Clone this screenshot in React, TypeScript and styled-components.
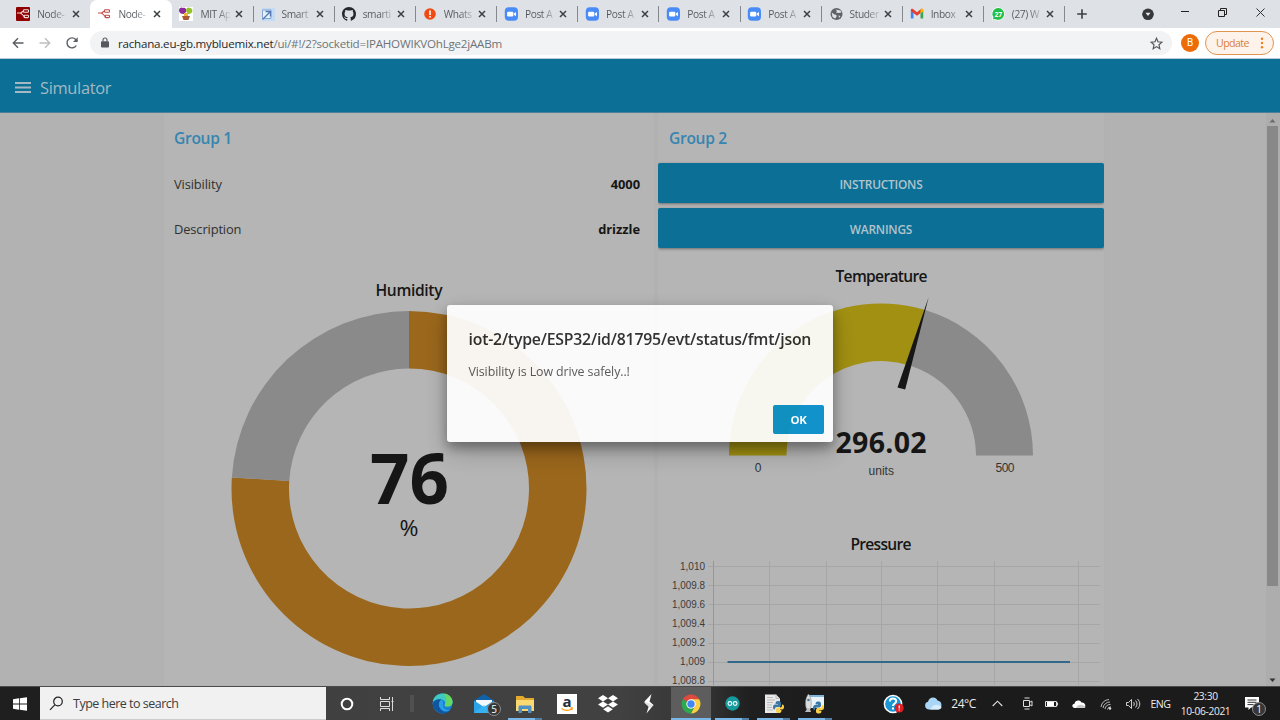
import React from 'react';
import styled, { createGlobalStyle } from 'styled-components';

const GlobalStyle = createGlobalStyle`
  * { box-sizing: border-box; }
  body { margin: 0; overflow: hidden; font-family: "Open Sans", "Noto Sans", sans-serif; }
  svg { display: block; flex: none; }
`;

const Screen = styled.div`
  position: relative;
  width: 1280px;
  height: 720px;
  display: flex;
  flex-direction: column;
  overflow: hidden;
  background: #b2b2b2;
`;

/* ---------- browser chrome ---------- */

const TabStrip = styled.div`
  height: 28px;
  flex: none;
  display: flex;
  padding-left: 9.3px;
  background: #dee1e6;
`;

const TabItem = styled.div<{ $active?: boolean; $divider?: boolean }>`
  position: relative;
  width: 81.15px;
  flex: none;
  display: flex;
  align-items: center;
  padding-left: ${p => (p.$divider ? 7.8 : 7)}px;
  background: ${p => (p.$active ? '#fff' : 'transparent')};
  border-radius: 7px 7px 0 0;
  &::after {
    content: '';
    position: absolute;
    right: -1px;
    top: 6px;
    width: 1px;
    height: 16px;
    background: ${p => (p.$divider ? '#85888c' : 'transparent')};
  }
`;

const TabText = styled.span<{ $fade: string }>`
  width: 30px;
  margin-left: 7px;
  overflow: hidden;
  white-space: nowrap;
  font-size: 10.2px;
  line-height: 16px;
  letter-spacing: -0.4px;
  color: transparent;
  background: linear-gradient(90deg, #54585d 55%, ${p => p.$fade} 108%);
  background-clip: text;
  -webkit-background-clip: text;
`;

const TabClose = styled.svg`
  margin-left: 4.5px;
`;

const NewTab = styled.svg`
  margin: 8px 0 0 12px;
`;

const WindowButtons = styled.div`
  margin-left: auto;
  width: 139px;
  display: flex;
  align-items: flex-start;
`;

const AddressRow = styled.div`
  height: 31px;
  flex: none;
  display: flex;
  align-items: center;
  background: #fff;
  border-bottom: 1px solid #b9cbd6;
  padding-left: 12px;
`;

const NavIcons = styled.div`
  width: 78px;
  display: flex;
  gap: 15px;
`;

const Omnibox = styled.div`
  width: 1082px;
  height: 24px;
  border-radius: 12px;
  background: #f1f3f4;
  display: flex;
  align-items: center;
  padding: 0 9px 0 10px;
`;

const Url = styled.span`
  flex: 1;
  margin-left: 8px;
  font-size: 11.6px;
  letter-spacing: -0.22px;
  color: #6f7377;
  white-space: nowrap;
  b { font-weight: 400; color: #26292c; }
`;

const Avatar = styled.div`
  width: 18px;
  height: 18px;
  margin: 0 6px 0 9px;
  border-radius: 50%;
  background: #ee6c08;
  color: #fff;
  font: 10px/18px Roboto, sans-serif;
  text-align: center;
`;

const UpdateChip = styled.div`
  width: 69px;
  height: 24px;
  border: 1px solid #e19352;
  border-radius: 12px;
  background: #fdf3ea;
  color: #dc7f39;
  font-size: 10.6px;
  letter-spacing: -0.55px;
  display: flex;
  align-items: center;
  justify-content: space-between;
  padding: 0 9px 0 10px;
`;

/* ---------- dashboard ---------- */

const Header = styled.div`
  height: 54px;
  flex: none;
  display: flex;
  align-items: center;
  padding: 3px 0 0 15px;
  gap: 9px;
  background: #0b6f96;
  color: #a4b9c2;
  font-size: 16.4px;
  border-bottom: 1px solid #4c8099;
`;

const HeaderTitle = styled.span`
  letter-spacing: -0.32px;
`;

const Body = styled.div`
  flex: 1;
  min-height: 0;
  display: flex;
  overflow: hidden;
  padding-left: 163px;
`;

const Card = styled.section<{ $w: number; $gap?: number }>`
  width: ${p => p.$w}px;
  margin-right: ${p => p.$gap ?? 0}px;
  flex: none;
  background: #b5b5b5;
  border: 1px solid #b1b1b1;
  border-top: 0;
  overflow: hidden;
`;

const GroupTitle = styled.h2<{ $inset: number }>`
  height: 50px;
  margin: 0;
  padding-left: ${p => p.$inset}px;
  font-size: 15.6px;
  font-weight: 600;
  line-height: 51px;
  letter-spacing: -0.32px;
  color: #3585b0;
`;

const Reading = styled.div`
  height: 45px;
  display: flex;
  justify-content: space-between;
  align-items: center;
  padding: 0 14px 4px 10px;
  font-size: 12.9px;
  letter-spacing: -0.13px;
  color: #303030;
  b { color: #161616; letter-spacing: -0.03px; }
`;

const ActionButton = styled.button`
  display: block;
  width: 446px;
  height: 40px;
  margin: 0 0 5px;
  padding: 0;
  border: 0;
  border-radius: 2px;
  background: #0b6f96;
  box-shadow: 0 1px 3px rgba(0, 0, 0, 0.4);
  color: #b2c3cb;
  font: 600 11.9px/42px "Open Sans", sans-serif;
  letter-spacing: -0.22px;
`;

const ScrollTrack = styled.div`
  margin-left: auto;
  width: 14px;
  display: flex;
  flex-direction: column;
  justify-content: space-between;
  background: #adadad;
  align-items: center;
  padding: 5px 2px 3px 1px;
`;

const ScrollThumb = styled.div`
  width: 11px;
  height: 460px;
  background: #888;
  margin: 3px 0 auto;
`;

const Dialog = styled.div`
  position: absolute;
  left: 447px;
  top: 305px;
  width: 386px;
  height: 137px;
  border-radius: 3px;
  background: #fff;
  opacity: 0.935;
  box-shadow: 0 6px 12px rgba(0, 0, 0, 0.34), 0 10px 26px rgba(0, 0, 0, 0.22);
  padding: 21px 9px 8px 21.5px;
  display: flex;
  flex-direction: column;
`;

const DialogTitle = styled.div`
  font-size: 15.8px;
  font-weight: 600;
  line-height: 27px;
  letter-spacing: -0.2px;
  color: #2a2a2a;
  white-space: nowrap;
`;

const DialogText = styled.div`
  margin-top: 9px;
  font-size: 12.4px;
  line-height: 20px;
  letter-spacing: -0.1px;
  color: #555;
`;

const OkButton = styled.button`
  margin: auto 0 0 auto;
  width: 51px;
  height: 29px;
  border: 0;
  border-radius: 2px;
  background: #0690cc;
  color: #fff;
  font: 700 11.4px/30px "Open Sans", sans-serif;
  letter-spacing: -0.3px;
  padding: 0;
`;

/* ---------- taskbar ---------- */

const Taskbar = styled.div`
  height: 34px;
  flex: none;
  display: flex;
  align-items: stretch;
  border-top: 1px solid #4b4b4b;
  background: linear-gradient(90deg, #1f1f1f 40px, #404040 41px, #414141 620px, #343434 705px, #1f1f1f 750px, #1b1b1b 860px);
`;

const Slot = styled.div<{ $w: number; $lit?: boolean; $run?: number }>`
  position: relative;
  width: ${p => p.$w}px;
  flex: none;
  display: flex;
  align-items: center;
  justify-content: center;
  background: ${p => (p.$lit ? '#5d5d5d' : 'transparent')};
  &::after {
    content: '';
    position: absolute;
    bottom: 0;
    left: calc(50% - ${p => (p.$run ?? 0) / 2}px);
    width: ${p => p.$run ?? 0}px;
    height: 2px;
    background: ${p => (p.$lit ? '#78b7e8' : 'linear-gradient(90deg, #78b7e8 80%, #4f7ea6 80%)')};
  }
`;

const SearchBox = styled.div`
  width: 286px;
  flex: none;
  background: #f1f1f1;
  border-bottom: 1px solid #ccc;
  display: flex;
  align-items: center;
  padding-left: 9px;
  gap: 9px;
  font-size: 12.5px;
  letter-spacing: -0.5px;
  color: #3c3c3c;
`;

const DragMark = styled.div`
  width: 4px;
  height: 17px;
  background: #505050;
`;

const CountBadge = styled.span<{ $x: number }>`
  position: absolute;
  left: ${p => p.$x}px;
  top: 15px;
  width: 14px;
  height: 14px;
  border-radius: 50%;
  background: #373737;
  border: 1px solid #8c8c8c;
  color: #fff;
  font-size: 10px;
  line-height: 12px;
  text-align: center;
`;

const TrayText = styled.span`
  color: #ececec;
  font-size: 12px;
  letter-spacing: -0.5px;
  white-space: nowrap;
`;

const Lang = styled(TrayText)`
  font-size: 10.6px;
`;

const Clock = styled.div`
  color: #ececec;
  font-size: 10.2px;
  line-height: 15px;
  letter-spacing: -0.35px;
  text-align: center;
  white-space: nowrap;
`;

const Spacer = styled.div`
  flex: 1;
`;

/* ---------- favicons ---------- */

const NodeRedMark = ({ color }: { color: string }) => (
  <g fill="none" stroke={color} strokeWidth="1.1">
    <path d="M1 6h3c2 0 2-2 4-2M4 6c2 0 3 3.5 5 3.5" />
    <rect x="7.5" y="2.8" width="5" height="2.4" rx=".8" />
    <rect x="8" y="8.2" width="4.5" height="2.4" rx=".8" />
  </g>
);

const favicons: Record<string, React.ReactNode> = {
  nodeDark: <><rect width="14" height="14" rx="1" fill="#8f0000" /><NodeRedMark color="#f2dada" /></>,
  node: <NodeRedMark color="#c34a4a" />,
  mit: (
    <>
      <rect width="14" height="14" fill="#fff" />
      <path d="M0 3.5C0 0 3 0 4 1c2-1 4 1 3 4L5 7C2 7 0 6 0 3.500Z" fill="#8c2a9b" />
      <path d="M7 4c0-4 3-4 4-3 3 0 4 6-2 6Z" fill="#96c02a" />
      <path d="M5 6h4v3H5Z" fill="#f0b13a" />
      <path d="M3 9h8l-1.500 4h-5Z" fill="#a85b35" />
    </>
  ),
  smart: (
    <>
      <rect x="1" y="1" width="13" height="13" fill="#c4dcf3" />
      <path d="M1.500 3h8.500v8.500H1.500Z" fill="#e6f0fa" stroke="#84a5cf" />
      <path d="M1.500 12.500 9 5M4.500 4.500h5v5" fill="none" stroke="#5578b4" strokeWidth="1.300" />
    </>
  ),
  github: (
    <path
      transform="scale(.875)"
      fill="#24292e"
      d="M8 0C3.580 0 0 3.580 0 8c0 3.540 2.290 6.530 5.470 7.590.4.070.55-.17.55-.38 0-.19-.01-.82-.01-1.490-2.010.37-2.530-.49-2.690-.94-.09-.23-.48-.94-.82-1.130-.28-.15-.68-.52-.01-.53.63-.01 1.080.58 1.230.82.72 1.210 1.870.87 2.330.66.070-.52.28-.87.51-1.070-1.780-.2-3.640-.89-3.640-3.950 0-.87.31-1.590.82-2.150-.08-.2-.36-1.020.08-2.120 0 0 .67-.21 2.200.82a7.600 7.600 0 0 1 4 0c1.530-1.040 2.200-.82 2.200-.82.44 1.100.16 1.920.08 2.120.51.56.82 1.270.82 2.150 0 3.070-1.870 3.750-3.650 3.950.29.25.54.73.54 1.480 0 1.070-.01 1.930-.01 2.200 0 .21.15.46.55.38A8 8 0 0 0 16 8c0-4.420-3.580-8-8-8Z"
    />
  ),
  alert: (
    <>
      <circle cx="7" cy="7" r="5.800" fill="#f04b14" />
      <rect x="6.200" y="3.500" width="1.600" height="4.500" fill="#fff" />
      <rect x="6.200" y="9" width="1.600" height="1.600" fill="#fff" />
    </>
  ),
  zoom: (
    <>
      <rect x=".8" y=".2" width="13.200" height="13.600" rx="4" fill="#4a8cf7" />
      <rect x="3.100" y="4.700" width="6.200" height="4.800" rx="1.200" fill="#fff" />
      <path d="m9.800 6.500 2.200-1.600v4.400L9.800 7.700Z" fill="#fff" />
    </>
  ),
  globe: (
    <>
      <circle cx="7.500" cy="7" r="6" fill="#5f6368" />
      <path d="M2.700 5.500 5.500 7.500 7.500 8v2L6 11.500 3.500 10M6.500 2.500 8 4 7 5.500 9.500 6l3-.5-1-2M9.500 8.500l2 .5-1.500 2Z" fill="#dee1e6" />
    </>
  ),
  gmail: (
    <>
      <path d="M.8 3.500v8h2.700V5Z" fill="#4285f4" />
      <path d="M13.200 3.500v8h-2.700V5Z" fill="#34a853" />
      <path d="M.8 4V3c0-1 1.300-1.600 2.200-.9L7 5.200l4-3.100c.9-.7 2.200-.1 2.200.9v1L7 8.700Z" fill="#e33e2f" />
      <path d="M10.500 2.600 11 2.100c.9-.7 2.200-.1 2.200.9v1.500l-2.700 2Z" fill="#fbbc04" />
    </>
  ),
  whatsapp: (
    <>
      <path d="M7.300.3a6.600 6.600 0 1 1-3.300 12.400L.8 13.600l.9-3.200A6.600 6.600 0 0 1 7.300.3Z" fill="#fff" />
      <path d="M7.300 1a5.900 5.900 0 1 1-3.200 10.900L1.800 12.600l.7-2.300A5.900 5.900 0 0 1 7.300 1Z" fill="#1fbf4a" />
      <text x="7.300" y="9.500" textAnchor="middle" fontSize="6.800" fontWeight="700" fill="#fff">27</text>
    </>
  ),
};

const tabs = [
  { icon: 'nodeDark', text: 'Node-' },
  { icon: 'node', text: 'Node-', active: true },
  { icon: 'mit', text: 'MIT Ap', divider: true },
  { icon: 'smart', text: 'Smart', divider: true },
  { icon: 'github', text: 'smarti', divider: true },
  { icon: 'alert', text: 'Whats', divider: true },
  { icon: 'zoom', text: 'Post A', divider: true },
  { icon: 'zoom', text: 'Post A', divider: true },
  { icon: 'zoom', text: 'Post A', divider: true },
  { icon: 'zoom', text: 'Post A', divider: true },
  { icon: 'globe', text: 'Studer', divider: true },
  { icon: 'gmail', text: 'Inbox', divider: true },
  { icon: 'whatsapp', text: '(27) W', divider: true },
];

const BrowserTabs = () => (
  <TabStrip>
    {tabs.map((t, i) => (
      <TabItem key={i} $active={t.active} $divider={t.divider}>
        <svg width="14" height="14">{favicons[t.icon]}</svg>
        <TabText $fade={t.active ? '#fff' : '#dee1e6'}>{t.text}</TabText>
        <TabClose width="8" height="8"><path d="m1 1 6 6M7 1 1 7" stroke="#3c4043" strokeWidth="1.500" /></TabClose>
      </TabItem>
    ))}
    <NewTab width="12" height="12"><path d="M6 1.200v9.600M1.200 6h9.600" stroke="#3c4043" strokeWidth="1.600" /></NewTab>
    <WindowButtons>
      <svg width="139" height="28">
        <circle cx="7" cy="14.300" r="5.800" fill="#35373a" />
        <path d="M4.500 12.800h5L7 16Z" fill="#e8eaed" />
        <path d="M40 11.500h8" stroke="#222" />
        <path d="M77.500 10.500h6v6h-6ZM79.500 10V8.500h6v6H84" fill="none" stroke="#222" />
        <path d="m115.500 8.500 8 8M123.500 8.500l-8 8" stroke="#333" />
      </svg>
    </WindowButtons>
  </TabStrip>
);

const AddressBar = () => (
  <AddressRow>
    <NavIcons>
      <svg width="12" height="12"><path d="M11.500 6H1.500M6 1.200 1.300 6 6 10.800" fill="none" stroke="#5a5e62" strokeWidth="1.400" /></svg>
      <svg width="12" height="12"><path d="M.5 6h10M6 1.200 10.700 6 6 10.800" fill="none" stroke="#bcbec1" strokeWidth="1.400" /></svg>
      <svg width="12" height="12">
        <path d="M10.300 8.500A5 5 0 1 1 9.700 2.500L11 4" fill="none" stroke="#5a5e62" strokeWidth="1.400" />
        <path d="M11.700.3V5H7Z" fill="#5a5e62" />
      </svg>
    </NavIcons>
    <Omnibox>
      <svg width="10" height="12">
        <rect x="1" y="4.200" width="8" height="6.300" rx="1" fill="#55595e" />
        <path d="M3 4.500V3a2 2 0 0 1 4 0v1.500" fill="none" stroke="#55595e" strokeWidth="1.100" />
      </svg>
      <Url><b>rachana.eu-gb.mybluemix.net</b>/ui/#!/2?socketid=IPAHOWIKVOhLge2jAABm</Url>
      <svg width="13" height="13"><path d="m6.500 1.300 1.500 3.500 3.900.4-2.900 2.600.8 3.900-3.300-2.100-3.300 2.100.8-3.900-2.900-2.600 3.900-.4Z" fill="none" stroke="#54585c" strokeWidth="1.200" /></svg>
    </Omnibox>
    <Avatar>B</Avatar>
    <UpdateChip>
      Update
      <svg width="4" height="12"><g fill="#ef7d1a"><circle cx="2" cy="1.800" r="1.200" /><circle cx="2" cy="6" r="1.200" /><circle cx="2" cy="10.200" r="1.200" /></g></svg>
    </UpdateChip>
  </AddressRow>
);

/* ---------- widgets ---------- */

const HumidityGauge = () => (
  <svg width="490" height="433" viewBox="164 253 490 433" textAnchor="middle" fill="#161616">
    <text x="409" y="295.500" fontSize="15.600" fontWeight="600" textLength="67">Humidity</text>
    <path d="M409 311a177.500 177.500 0 1 1-177.150 166.400l57.400 3.600A120 120 0 1 0 409 368.500Z" fill="#9b671c" />
    <path d="M231.850 477.400A177.500 177.500 0 0 1 409 311v57.500A120 120 0 0 0 289.250 481Z" fill="#8a8a8a" />
    <text x="409.500" y="504" fontSize="69" fontWeight="700" textLength="79">76</text>
    <text x="409" y="536" fontSize="22.500" textLength="19" lengthAdjust="spacingAndGlyphs">%</text>
  </svg>
);

const TemperatureGauge = () => (
  <svg width="446" height="270" viewBox="658 253 446 270" textAnchor="middle" fill="#161616">
    <text x="881.500" y="281.500" fontSize="15.600" fontWeight="600" textLength="92">Temperature</text>
    <path d="M729 455.500a152 152 0 0 1 195.400-145.700L908 365A94.500 94.500 0 0 0 786.500 455.500Z" fill="#a19012" />
    <path d="M924.400 309.800A152 152 0 0 1 1033 455.500h-57A94.500 94.500 0 0 0 908 365Z" fill="#8a8a8a" />
    <path d="M928.700 297 905.200 389.500 897.500 387.500Z" />
    <text x="881" y="452.500" fontSize="28.500" fontWeight="700" textLength="91">296.02</text>
    <g fontFamily="Liberation Sans, Arial, sans-serif" fontSize="12" fill="#333">
      <text x="758" y="471.500">0</text>
      <text x="881.300" y="475">units</text>
      <text x="1005" y="471.500" textLength="19">500</text>
    </g>
  </svg>
);

const yTicks = ['1,010', '1,009.8', '1,009.6', '1,009.4', '1,009.2', '1,009', '1,008.8'];
const xGrid = [769.5, 826.5, 881.5, 937.5, 994.5, 1078.5];

const PressureChart = () => (
  <svg width="446" height="163" viewBox="658 523 446 163">
    <text x="881" y="549.500" fontSize="15.600" fontWeight="600" fill="#161616" textAnchor="middle" textLength="61">Pressure</text>
    <g stroke="#a6a6a6" strokeWidth="1">
      {yTicks.map((t, i) => <path key={t} d={`M708 ${Math.round(566 + i * 19.2) + 0.5}H1100`} />)}
      {xGrid.map(x => <path key={x} d={`M${x} 561V686`} />)}
      <path d="M713.500 561V686" stroke="#969696" />
    </g>
    <g fontFamily="Liberation Sans, Arial, sans-serif" fontSize="10" fill="#3b3b3b" textAnchor="end">
      {yTicks.map((t, i) => (
        <text key={t} x="705" y={569.5 + i * 19.1} textLength={t.length > 5 ? 33 : 25} lengthAdjust="spacingAndGlyphs">{t}</text>
      ))}
    </g>
    <path d="M727.500 662H1070" stroke="#32698a" strokeWidth="2" />
  </svg>
);

const Dashboard = () => (
  <>
    <Header>
      <svg width="16" height="12"><path d="M0 2h16M0 6.500h16M0 11h16" stroke="#a4b9c2" strokeWidth="1.900" /></svg>
      <HeaderTitle>Simulator</HeaderTitle>
    </Header>
    <Body>
      <Card $w={492} $gap={2}>
        <GroupTitle $inset={10}>Group 1</GroupTitle>
        <Reading><span>Visibility</span><b>4000</b></Reading>
        <Reading><span>Description</span><b>drizzle</b></Reading>
        <HumidityGauge />
      </Card>
      <Card $w={448}>
        <GroupTitle $inset={11}>Group 2</GroupTitle>
        <ActionButton>INSTRUCTIONS</ActionButton>
        <ActionButton>WARNINGS</ActionButton>
        <TemperatureGauge />
        <PressureChart />
      </Card>
      <ScrollTrack>
        <svg width="7" height="5"><path d="M.5 4.500 3.500 1l3 3.500Z" fill="#6b6b6b" /></svg>
        <ScrollThumb />
        <svg width="7" height="5"><path d="M.5.5 3.500 4l3-3.500Z" fill="#333" /></svg>
      </ScrollTrack>
    </Body>
  </>
);

/* ---------- taskbar icons ---------- */

const PythonMark = ({ x, y }: { x: number; y: number }) => (
  <g transform={`translate(${x} ${y})`}>
    <path d="M5 0c3 0 3 1 3 4 0 1-1 2-2 2H4C2 6 2 7 2 8.500 0 8.500 0 7 0 6s.5-2.500 2-2.500h3V3H2.500C2.500 1 3 0 5 0Z" fill="#3b78a8" />
    <path d="M6 12c-3 0-3-1-3-3s1-2.500 2-2.500h2c2 0 2-1 2-3 2 0 2 1.500 2 2.500s-.5 2.500-2 2.500H6v.5h2.500C8.500 11 8 12 6 12Z" fill="#fcd04b" />
  </g>
);

const TaskIcons = () => (
  <>
    <Slot $w={40}>
      <svg width="14" height="14"><path d="M0 2.200 6 1.300v5.300H0ZM6.800 1.200 14 .2v6.400H6.800ZM0 7.400h6v5.300l-6-.9ZM6.800 7.400H14v6.400l-7.200-1Z" fill="#fff" /></svg>
    </Slot>
    <SearchBox>
      <svg width="15" height="15"><circle cx="9" cy="5.500" r="4.300" fill="none" stroke="#222" strokeWidth="1.200" /><path d="M6 8.700 1 13.800" stroke="#222" strokeWidth="1.200" /></svg>
      Type here to search
    </SearchBox>
    <Slot $w={41}><svg width="14" height="14"><circle cx="7" cy="7" r="5.300" fill="none" stroke="#fff" strokeWidth="2" /></svg></Slot>
    <Slot $w={39}>
      <svg width="16" height="14"><path d="M1.500 0v2.500h9V0M1.500 14v-2.500h9V14M1.500 4.500h9v5h-9ZM13.500 0v14M12.500 4.500h2" fill="none" stroke="#dcdcdc" /></svg>
    </Slot>
    <Slot $w={12}><DragMark /></Slot>
    <Slot $w={48}>
      <svg width="21" height="21">
        <circle cx="10.500" cy="10.500" r="10" fill="#1680d4" />
        <path d="M.8 8.500C2 2.500 7 .3 11 .5c5 .2 9.500 4 9.500 8.500 0 3-2.500 4.600-5 4.600s-3.600-.8-2.800-2.100C14 9 12 6.500 9 6.500c-3.500 0-6.500 1-8.200 2Z" fill="#3fc9c2" />
        <path d="M12 .5c5 .5 8.500 4 8.500 8.500 0 3-2.500 4.600-5 4.600-1.500 0-2.700-.3-2.900-1C16 9 14 4 12 .5Z" fill="#66d85f" />
        <path d="M.8 12C1 7 6 5.500 9.500 6.500 6 8 6 15 11 18.200c3 1.500 6 0 7.500-1.500-3 4.500-9 4.500-12.500 2S.8 14 .8 12Z" fill="#0e57a0" />
        <path d="M9.500 6.700C7 8 6 12 8 15c2 3.500 7 4.200 10 2-4 .5-8-2-7-6 .4-2-.2-3.500-1.500-4.300Z" fill="#2a9ce8" />
      </svg>
    </Slot>
    <Slot $w={36}>
      <svg width="22" height="20">
        <path d="M1 6.500 11 0l10 6.500V19H1Z" fill="#1061a8" />
        <path d="M3 6h16v8H3Z" fill="#f4f8fb" />
        <path d="M1 6.500 11 13l10-6.500V19H1Z" fill="#2aa4e8" />
        <path d="M1 19 11 11l10 8Z" fill="#41bdf5" opacity=".6" />
      </svg>
      <CountBadge $x={21}>5</CountBadge>
    </Slot>
    <Slot $w={45} $run={34}>
      <svg width="20" height="18">
        <path d="M1 1h7l2 2h9v13H1Z" fill="#e4aa2e" />
        <path d="M1 5h18v11H1Z" fill="#fad872" />
        <path d="M3.500 18v-6c0-1 .5-1.500 1.500-1.500h10c1 0 1.500.5 1.500 1.500v6h-3.500v-4h-6v4Z" fill="#4f91c4" />
      </svg>
    </Slot>
    <Slot $w={40}>
      <svg width="20" height="20">
        <rect width="20" height="20" fill="#fff" />
        <text x="10" y="12.500" fontSize="15" fontWeight="700" textAnchor="middle" fill="#222d3e">a</text>
        <path d="M4.500 14.500c3.500 2.500 7.500 2.300 10.500.3M13.300 14l2-.1-.5 2" fill="none" stroke="#ff9900" strokeWidth="1.200" />
      </svg>
    </Slot>
    <Slot $w={42}>
      <svg width="20" height="18"><path d="M5 0 10 3.200 5 6.400 0 3.200ZM15 0l5 3.200-5 3.200-5-3.200ZM5 6.400l5 3.200-5 3.200-5-3.200ZM15 6.400l5 3.200-5 3.200-5-3.200ZM10 11.200l4.800 3.100L10 17.500l-4.800-3.200Z" fill="#fff" /></svg>
    </Slot>
    <Slot $w={40}>
      <svg width="12" height="20"><path d="M8.500 0 1.500 7.500l4.500 4L3.500 19.500l7-8.500L6.500 7.500Z" fill="#fff" /><path d="M1.500 7.500 10.500 11 7 14 1.500 9Z" fill="#e4e4e4" /></svg>
    </Slot>
    <Slot $w={2} />
    <Slot $w={40} $lit $run={40}>
      <svg width="20" height="20" viewBox="0 0 20 20">
        <path d="M10 10 1.800 5.300A9.500 9.500 0 0 1 18.200 5.300Z" fill="#dd4b3e" />
        <path d="M10 10 1.800 5.300A9.500 9.500 0 0 0 10 19.500L14 11Z" fill="#2da94f" />
        <path d="M10 5.300h8.200A9.500 9.500 0 0 1 10 19.500L14 12Z" fill="#fcd03f" />
        <circle cx="10" cy="10" r="4.700" fill="#fff" /><circle cx="10" cy="10" r="3.700" fill="#4285f4" />
      </svg>
    </Slot>
    <Slot $w={42} $run={34}>
      <svg width="15" height="15"><circle cx="7.500" cy="7.500" r="7.200" fill="#159a9e" /><g fill="none" stroke="#fff" strokeWidth="1.100"><circle cx="4.900" cy="7.500" r="1.900" /><circle cx="10.100" cy="7.500" r="1.900" /></g></svg>
    </Slot>
    <Slot $w={41} $run={33}>
      <svg width="20" height="20"><path d="M1 .5h11l4 4v14.500H1Z" fill="#e9e9e9" /><path d="M12 .5v4h4M3 3.500h6M3 6h8M3 8.500h6M3 11h5M3 13.500h5M3 16h6" fill="none" stroke="#bbb" /><PythonMark x={9} y={7} /></svg>
    </Slot>
    <Slot $w={42} $run={34}>
      <svg width="20" height="20"><path d="M4 1h15v13H4Z" fill="#e9f2f8" /><path d="M4 1h15v2H4Z" fill="#7fb5d8" /><path d="M3.500 0C7 4 6.500 11 5.500 15h-4C0 11 0 4 3.500 0Z" fill="#ddd" stroke="#888" strokeWidth=".6" /><circle cx="3.500" cy="6" r="1.300" fill="#4a7fa5" /><path d="m0 18 2-3h3l1 3Z" fill="#bcbcbc" /><PythonMark x={8} y={7.500} /></svg>
    </Slot>
  </>
);

const Tray = () => (
  <>
    <Slot $w={38}>
      <svg width="21" height="20"><circle cx="10" cy="10" r="8.600" fill="#1a96d2" stroke="#fff" strokeWidth="1.500" /><path d="M6.800 7.500c0-4 6.400-4 6.400-.3 0 2.300-3.200 2.300-3.200 4.800M10 13.500v2" fill="none" stroke="#fff" strokeWidth="2" /><circle cx="16.200" cy="14" r="4.500" fill="#df1d25" /><path d="M16.200 11.500v3M16.200 15.500v1" stroke="#fff" strokeWidth="1.200" /></svg>
    </Slot>
    <Slot $w={43}>
      <svg width="19" height="13"><path d="M4.500 12.500a4 4 0 0 1-.5-7.800C5-.5 12-1 13.500 3.500a4.700 4.700 0 0 1 1 9Z" fill="#a9d5f7" /><path d="M6 12.500c2-4 6-6 9.500-4l2 1.500c0 1.500-1.500 2.500-3 2.500Z" fill="#d8edfb" /></svg>
    </Slot>
    <Slot $w={17}><TrayText>24°C</TrayText></Slot>
    <Slot $w={51}><svg width="11" height="7"><path d="m.7 6 4.800-4.800L10.300 6" fill="none" stroke="#e0e0e0" strokeWidth="1.100" /></svg></Slot>
    <Slot $w={8}>
      <svg width="11" height="13"><path d="M1.500 3.500h6v6h-6ZM7.500 5.500l2.500-1.500v5L7.500 7.500M2.500 1h5M2.500 12h5" fill="none" stroke="#ddd" /></svg>
    </Slot>
    <Slot $w={42}><svg width="14" height="8"><path d="M.5 1.500h11v5H.5ZM12.500 2.500v3" fill="none" stroke="#ddd" /><path d="M2 2h7v4H2Z" fill="#fff" /></svg></Slot>
    <Slot $w={12}><svg width="14" height="10"><path d="M3 9C-.5 9-.5 5 2.500 4.700 3 1 8 .5 9.500 3.500c4-.5 5.500 5.500 1.500 5.500Z" fill="#fff" /><path d="M4 9c1-3 4-4 6-3s4 .5 3 3Z" fill="#c8c8c8" /></svg></Slot>
    <Slot $w={42}><svg width="12" height="12"><g fill="none" stroke="#bdbdbd"><path d="M1 9A9 9 0 0 1 9 1.500M3 10a7 7 0 0 1 7-6M5 11a5 5 0 0 1 5.500-4.500M7.500 11.500A3 3 0 0 1 11 9" /></g><circle cx="10" cy="10.500" r="1.200" fill="#ddd" /></svg></Slot>
    <Slot $w={12}><svg width="15" height="12"><path d="M.5 4.500h2l3-3v9l-3-3h-2ZM7.500 4c1 1 1 3 0 4M9.500 2.500c2 2 2 5 0 7M11.500 1c3 3 3 7 0 10" fill="none" stroke="#d0d0d0" /></svg></Slot>
    <Slot $w={43}><Lang>ENG</Lang></Slot>
    <Slot $w={47}><Clock>23:30<br />10-06-2021</Clock></Slot>
    <Slot $w={46}>
      <svg width="14" height="14"><path d="M0 0h14v10.500H6L3.500 13v-2.500H0Z" fill="#fff" /><path d="M2.500 3h9M2.500 5.300h9M2.500 7.600h6" stroke="#333" /></svg>
      <CountBadge $x={23}>1</CountBadge>
    </Slot>
    <Slot $w={5} />
  </>
);

export default function App() {
  return (
    <Screen>
      <GlobalStyle />
      <BrowserTabs />
      <AddressBar />
      <Dashboard />
      <Taskbar>
        <TaskIcons />
        <Spacer />
        <Tray />
      </Taskbar>
      <Dialog>
        <DialogTitle>iot-2/type/ESP32/id/81795/evt/status/fmt/json</DialogTitle>
        <DialogText>Visibility is Low drive safely..!</DialogText>
        <OkButton>OK</OkButton>
      </Dialog>
    </Screen>
  );
}
